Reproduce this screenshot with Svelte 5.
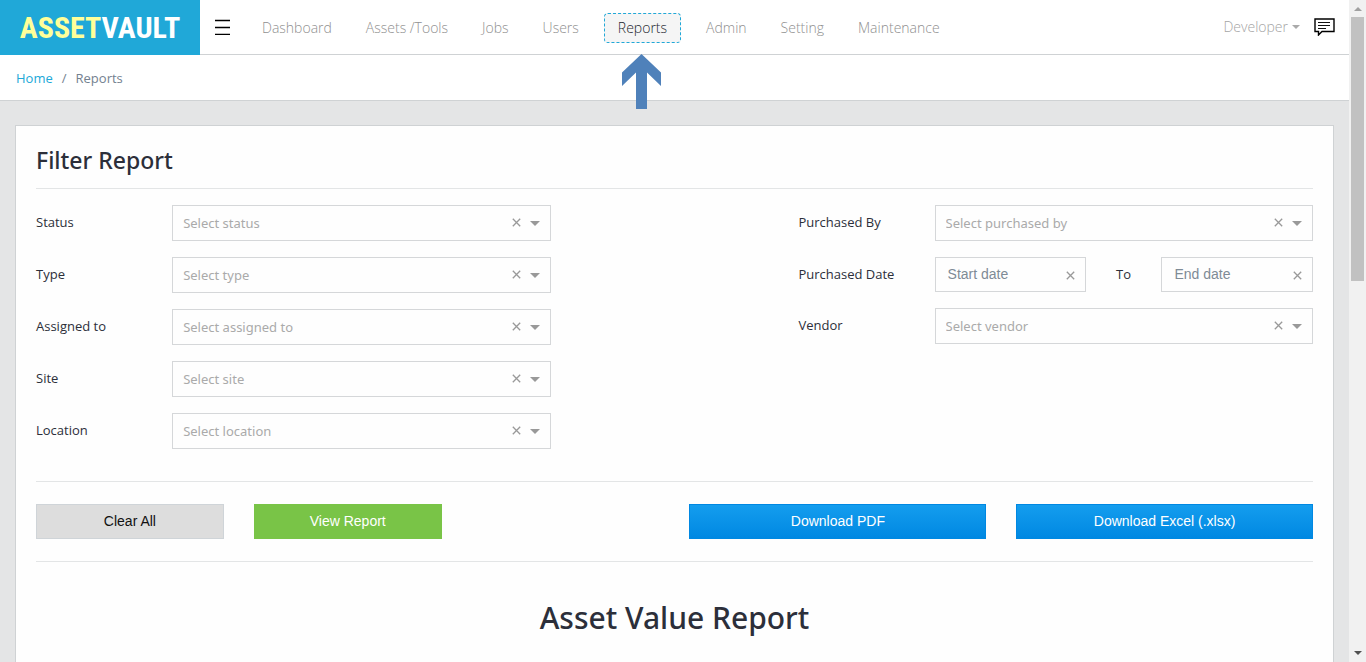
<script lang="ts">
type Field = { id: string; label: string; placeholder: string };

const navItems = ['Dashboard', 'Assets /Tools', 'Jobs', 'Users', 'Reports', 'Admin', 'Setting', 'Maintenance'];
const active = 'Reports';

const leftFields: Field[] = [
	{ id: 'status', label: 'Status', placeholder: 'Select status' },
	{ id: 'type', label: 'Type', placeholder: 'Select type' },
	{ id: 'assigned', label: 'Assigned to', placeholder: 'Select assigned to' },
	{ id: 'site', label: 'Site', placeholder: 'Select site' },
	{ id: 'location', label: 'Location', placeholder: 'Select location' }
];
const purchasedBy: Field = { id: 'purchased-by', label: 'Purchased By', placeholder: 'Select purchased by' };
const vendor: Field = { id: 'vendor', label: 'Vendor', placeholder: 'Select vendor' };

let values: Record<string, string> = $state({});
let startDate = $state('');
let endDate = $state('');

function clearAll() {
	for (const key of Object.keys(values)) values[key] = '';
	startDate = '';
	endDate = '';
}
</script>

{#snippet cross()}
	<svg width="9" height="9" viewBox="0 0 9 9" aria-hidden="true">
		<path d="M.8 .8 8.2 8.2M8.2 .8 .8 8.2" fill="none" stroke="currentColor" stroke-width="1.3" />
	</svg>
{/snippet}

{#snippet selectField(field: Field)}
	<div class="field">
		<label for={field.id}>{field.label}</label>
		<div class="control">
			<select id={field.id} value={values[field.id] ?? ''} onchange={(e) => (values[field.id] = e.currentTarget.value)}>
				<option value="">{field.placeholder}</option>
			</select>
			<button type="button" class="clear" aria-label="Clear {field.label}" onclick={() => (values[field.id] = '')}>
				{@render cross()}
			</button>
			<span class="caret"></span>
		</div>
	</div>
{/snippet}

<div class="window">
	<div class="page">
		<header>
			<a class="logo" href="#home"><span>ASSET</span>VAULT</a>
			<button type="button" class="burger" aria-label="Toggle menu">
				<svg width="16" height="16" viewBox="0 0 16 16" aria-hidden="true">
					<path d="M0 1.5h15M0 8.5h15M0 15.5h15" stroke="#000" stroke-width="1.3" />
				</svg>
			</button>
			<nav>
				{#each navItems as item}
					<a href="#{item}" class:active={item === active}>
						{item}
						{#if item === active}
							<svg class="pointer" width="40" height="55" viewBox="0 0 40 55" aria-hidden="true">
								<path d="M19.5 0 39 18.5V32L25 18.5V55H14V18.5L0 32V18.5Z" fill="#4f81ba" />
							</svg>
						{/if}
					</a>
				{/each}
			</nav>
			<button type="button" class="user">Developer <span class="user-caret"></span></button>
			<button type="button" class="chat" aria-label="Messages">
				<svg width="21" height="18" viewBox="0 0 21 18" aria-hidden="true">
					<path d="M1 1H20V13.5H8L4.5 17V13.5H1Z" fill="none" stroke="#000" stroke-width="1.4" />
					<path d="M4 4.5h12M4 7.5h12M4 10.5h8" stroke="#111" stroke-width="1.2" />
				</svg>
			</button>
		</header>

		<div class="breadcrumb">
			<a href="#home">Home</a>
			<span>/</span>
			<span>Reports</span>
		</div>

		<main>
			<section class="card">
				<h3>Filter Report</h3>
				<form class="filters" onsubmit={(e) => e.preventDefault()}>
					<div class="column">
						{#each leftFields as field}
							{@render selectField(field)}
						{/each}
					</div>
					<div class="column right">
						{@render selectField(purchasedBy)}
						<div class="field">
							<label for="start-date">Purchased Date</label>
							<div class="control date">
								<input id="start-date" type="text" placeholder="Start date" bind:value={startDate} />
								<button type="button" class="clear" aria-label="Clear start date" onclick={() => (startDate = '')}>
									{@render cross()}
								</button>
							</div>
							<label class="to" for="end-date">To</label>
							<div class="control date">
								<input id="end-date" type="text" placeholder="End date" bind:value={endDate} />
								<button type="button" class="clear" aria-label="Clear end date" onclick={() => (endDate = '')}>
									{@render cross()}
								</button>
							</div>
						</div>
						{@render selectField(vendor)}
					</div>
				</form>
				<div class="actions">
					<button type="button" class="btn grey" onclick={clearAll}>Clear All</button>
					<button type="button" class="btn green">View Report</button>
					<button type="button" class="btn blue first">Download PDF</button>
					<button type="button" class="btn blue">Download Excel (.xlsx)</button>
				</div>
				<h2>Asset Value Report</h2>
			</section>
		</main>
	</div>

	<div class="scrollbar" aria-hidden="true">
		<span class="up"></span>
		<div class="track"><div class="thumb"></div></div>
		<span class="down"></span>
	</div>
</div>

<style>
	:global(body) {
		margin: 0;
		overflow: hidden;
	}
	.window {
		display: flex;
		height: 100vh;
		overflow: hidden;
		font: 13px/20px 'Segoe UI', 'Open Sans', 'Noto Sans', sans-serif;
		color: #2c2f3a;
		background: #e4e5e6;
	}
	.window * {
		box-sizing: border-box;
	}
	.page {
		flex: 1;
		min-width: 0;
	}
	a {
		text-decoration: none;
	}
	button {
		font: inherit;
		padding: 0;
		border: 0;
		background: none;
		color: inherit;
		cursor: pointer;
	}
	svg {
		display: block;
	}

	header {
		display: flex;
		align-items: center;
		height: 55px;
		background: #fff;
		border-bottom: 1px solid #cfd2d4;
	}
	.logo {
		width: 200px;
		height: 55px;
		align-self: flex-start;
		background: #20a8d8;
		color: #fff;
		font: bold 30px/55px 'Roboto Condensed', 'Liberation Sans Narrow', 'DejaVu Sans Condensed', sans-serif;
		text-align: center;
	}
	.logo span {
		color: #ffff99;
	}
	.burger {
		margin-left: 15px;
	}
	nav {
		display: flex;
		margin: 2px 0 0 14px;
	}
	nav a {
		position: relative;
		margin: 0 4px;
		padding: 4px 12px;
		border: 1px solid transparent;
		color: #909090;
		font-size: 14px;
		font-weight: 300;
	}
	nav a.active {
		margin: 0 8px;
		padding: 4px 13px;
		color: #23262f;
		background: #f5f5f5;
		border: 1px dashed #20a8d8;
		border-radius: 4px;
	}
	.pointer {
		position: absolute;
		top: 40px;
		left: 50%;
		margin-left: -20px;
	}
	.user {
		display: flex;
		align-items: center;
		gap: 4px;
		margin-left: auto;
		color: #a4a4a4;
		font-size: 14px;
		font-weight: 300;
	}
	.user-caret {
		border: 4px solid transparent;
		border-top-color: #aaa;
		border-bottom: 0;
	}
	.chat {
		margin: 0 14px;
	}

	.breadcrumb {
		display: flex;
		gap: 9px;
		padding: 13px 16px 12px;
		background: #fff;
		border-bottom: 1px solid #cfd2d4;
		color: #73818f;
	}
	.breadcrumb a {
		color: #20a8d8;
	}

	main {
		padding: 24px 15px;
	}
	.card {
		min-height: 100vh;
		padding: 20px;
		background: #fefefe;
		border: 1px solid #cfd2d4;
	}
	h2,
	h3 {
		margin: 0;
		font-family: 'Segoe UI', 'Noto Sans', sans-serif;
		font-weight: 500;
	}
	h3 {
		padding-bottom: 14px;
		font-size: 23px;
		line-height: 28px;
		border-bottom: 1px solid #e3e5e6;
	}
	h2 {
		margin-top: 36px;
		font-size: 30px;
		line-height: 40px;
		text-align: center;
	}

	/* 12-column grid, shared by the filters, their inner rows and the buttons */
	.filters,
	.field,
	.actions {
		display: grid;
		grid-template-columns: repeat(12, minmax(0, 1fr));
		column-gap: 30px;
	}
	.filters {
		padding: 16px 0 32px;
	}
	.column {
		grid-column: span 5;
		display: flex;
		flex-direction: column;
		gap: 16px;
	}
	.column.right {
		grid-column: 8 / span 5;
	}
	.field label {
		grid-column: span 3;
		line-height: 34px;
		white-space: nowrap;
	}
	.field .to {
		grid-column: span 1;
	}
	.control {
		grid-column: span 9;
		position: relative;
	}
	.control.date {
		grid-column: span 4;
	}
	select,
	input {
		display: block;
		width: 100%;
		height: 36px;
		margin: 0;
		padding: 0 50px 0 10px;
		border: 1px solid #d5d7d9;
		border-radius: 0;
		background: transparent;
		appearance: none;
		font: inherit;
		font-family: 'Segoe UI', 'Noto Sans', sans-serif;
		color: #aaa;
	}
	input {
		height: 35px;
		padding: 0 30px 2px 12px;
		font-family: Arial, 'Liberation Sans', sans-serif;
		font-size: 14px;
		color: #5c6873;
	}
	input::placeholder {
		color: #7f8b96;
		opacity: 1;
	}
	.clear {
		position: absolute;
		top: 13px;
		right: 30px;
		color: #999;
	}
	.date .clear {
		top: 14px;
		right: 11px;
	}
	.caret {
		position: absolute;
		top: 16px;
		right: 11px;
		border: 5px solid transparent;
		border-top-color: #999;
		border-bottom: 0;
		pointer-events: none;
	}

	.actions {
		padding: 22px 0;
		border: solid #e3e5e6;
		border-width: 1px 0;
	}
	.btn {
		grid-column: span 2;
		height: 35px;
		padding-bottom: 2px;
		border: 1px solid;
		font-family: Arial, 'Liberation Sans', sans-serif;
		font-size: 14px;
	}
	.grey {
		background: #ddd;
		border-color: #cfd4d8;
		color: #111;
	}
	.green {
		background: #79c447;
		border-color: #79c447;
		color: #fff;
	}
	.blue {
		grid-column: span 3;
		background: linear-gradient(#149dee, #0088e2);
		border-color: #0088e2;
		color: #fff;
	}
	.blue.first {
		grid-column: 7 / span 3;
	}

	.scrollbar {
		display: flex;
		flex-direction: column;
		align-items: center;
		width: 17px;
		padding: 7px 0;
		background: #f1f1f1;
	}
	.up,
	.down {
		border: 4px solid transparent;
	}
	.up {
		border-top: 0;
		border-bottom-color: #a0a0a0;
	}
	.down {
		border-bottom: 0;
		border-top-color: #505050;
	}
	.track {
		flex: 1;
		width: 13px;
		padding: 6px 0;
	}
	.thumb {
		height: 42%;
		background: #c1c1c1;
	}
</style>
